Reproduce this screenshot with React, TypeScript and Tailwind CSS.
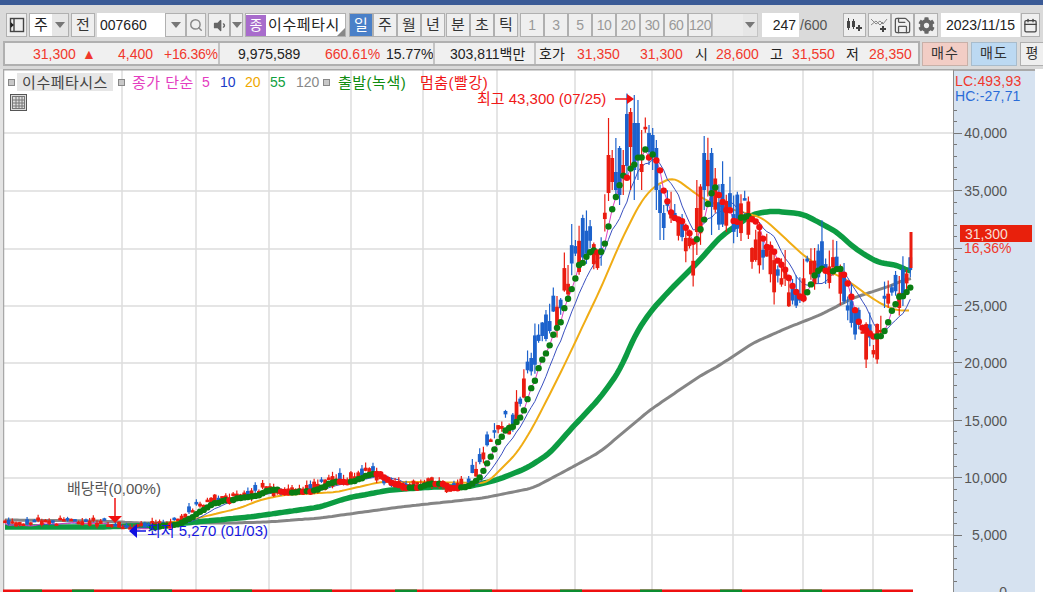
import { Calendar, Save, Search } from "lucide-react";
import { FaCog, FaVolumeDown } from "react-icons/fa";

type Pt = [number, number];
type Bar = { x: number; open: number; close: number; high: number; low: number };

const FONT = { fontFamily: '"Liberation Sans", "Noto Sans CJK KR", sans-serif' };

const GRID_X = [122, 196, 269, 351, 423, 497, 575, 652, 733, 803, 873];
const GRID_Y = [133, 191, 249, 306, 363, 421, 478, 535];
const AXIS = [
  ["40,000", 133],
  ["35,000", 191],
  ["25,000", 306],
  ["20,000", 363],
  ["15,000", 421],
  ["10,000", 478],
  ["5,000", 535],
  ["0", 592],
] as const;

const CLOSE: Pt[] = [
  [5, 523], [30, 522], [60, 521], [100, 522], [122, 526], [135, 529], [150, 525], [175, 520], [190, 510],
  [210, 500], [240, 497], [262, 489], [290, 491], [310, 490], [330, 481], [350, 475], [370, 472], [390, 482],
  [410, 488], [430, 484], [450, 487], [465, 485], [480, 460], [490, 440], [500, 425], [515, 418], [520, 395],
  [530, 365], [545, 335], [555, 310], [565, 280], [575, 250], [585, 240], [597, 262], [605, 230], [612, 165],
  [620, 180], [632, 125], [640, 145], [655, 150], [662, 210], [670, 228], [680, 240], [695, 250], [705, 165],
  [712, 195], [725, 215], [745, 215], [755, 235], [770, 262], [790, 285], [800, 292], [810, 268], [830, 268],
  [840, 280], [850, 325], [860, 332], [875, 345], [885, 310], [895, 285], [905, 292], [909, 285],
];
const MA20: Pt[] = [
  [150, 525], [190, 520], [240, 508], [260, 500], [283, 495], [337, 492], [380, 482], [417, 482], [487, 483],
  [517, 453], [533, 427], [557, 380], [573, 347], [587, 317], [600, 290], [620, 243], [630, 223], [640, 203],
  [653, 187], [673, 177], [687, 187], [700, 197], [717, 205], [763, 218], [787, 240], [803, 255], [820, 267],
  [847, 280], [870, 297], [887, 307], [900, 311], [911, 310],
];
const MA55: Pt[] = [
  [5, 527], [100, 527], [163, 525], [250, 517], [320, 507], [347, 498], [390, 490], [433, 487], [467, 487],
  [497, 480], [527, 468], [550, 453], [570, 430], [600, 398], [620, 370], [635, 335], [650, 312], [670, 290],
  [700, 260], [720, 237], [740, 223], [753, 214], [773, 211], [803, 214], [820, 223], [837, 232], [853, 247],
  [870, 258], [880, 263], [897, 265], [912, 273],
];
const MA120: Pt[] = [
  [5, 520], [100, 521], [140, 523], [233, 523], [267, 522], [320, 518], [400, 507], [483, 498], [533, 488],
  [567, 470], [600, 452], [650, 410], [700, 376], [720, 365], [753, 343], [787, 328], [820, 315], [853, 298],
  [887, 287], [912, 277],
];

// candles read off the picture around the two peaks: x, open, close, high, low
const FIXED: number[][] = [
  [609, 193, 155, 118, 201],
  [613, 182, 158, 150, 190],
  [617, 172, 190, 138, 195],
  [621, 148, 195, 146, 205],
  [625, 175, 165, 150, 195],
  [631, 147, 112, 108, 190],
  [635, 123, 170, 95, 200],
  [639, 123, 160, 100, 180],
  [643, 172, 164, 130, 190],
  [650, 133, 152, 125, 165],
  [654, 135, 155, 128, 170],
  [658, 148, 190, 140, 210],
  [661, 190, 213, 185, 240],
  [665, 213, 228, 205, 240],
  [698, 232, 208, 180, 255],
  [705, 153, 190, 136, 210],
  [712, 153, 207, 148, 235],
];

const interp = (pts: Pt[], x: number) => {
  if (x <= pts[0][0]) return pts[0][1];
  for (let i = 1; i < pts.length; i++) {
    if (x <= pts[i][0]) {
      const [x0, y0] = pts[i - 1];
      const [x1, y1] = pts[i];
      return y0 + ((y1 - y0) * (x - x0)) / (x1 - x0);
    }
  }
  return pts[pts.length - 1][1];
};

// small seeded generator so that the candles stay the same on every load
let seed = 7331;
const rnd = () => {
  seed = (seed * 16807) % 2147483647;
  return seed / 2147483647;
};

const bars: Bar[] = Array.from({ length: 247 }, (_, i) => {
  const x = 5 + i * 3.68;
  const fixed = FIXED.find((f) => Math.abs(f[0] - x) < 1.85);
  if (fixed) return { x, open: fixed[1], close: fixed[2], high: fixed[3], low: fixed[4] };
  const mid = interp(CLOSE, x);
  const amp = (592 - mid) * (x > 470 ? 0.085 : 0.06);
  let close = mid + (rnd() - 0.5) * amp * 1.3;
  let open = mid + (rnd() - 0.5) * amp * 2.2;
  // the flat part of the chart is mostly red
  if (x < 470 && close > open && rnd() < 0.6) [close, open] = [open, close];
  return {
    x,
    close,
    open,
    high: Math.min(open, close) - rnd() * amp * 0.8,
    low: Math.max(open, close) + rnd() * amp * 0.45,
  };
});

const sma = (n: number) =>
  bars.map((_, i) => {
    const part = bars.slice(Math.max(0, i - n + 1), i + 1);
    return part.reduce((s, b) => s + b.close, 0) / part.length;
  });
const ma5 = sma(5);
const ma10 = sma(10);

const toLine = (pts: Pt[]) => pts.map((p) => `${p[0].toFixed(1)},${p[1].toFixed(1)}`).join(" ");
const lineFrom = (vals: number[]) => toLine(vals.map((v, i): Pt => [bars[i].x, v + 3]));

// resample the hand-read points so that the long averages bend softly
const smooth = (pts: Pt[]) => {
  const xs: number[] = [];
  for (let x = pts[0][0]; x <= pts[pts.length - 1][0]; x += 3) xs.push(x);
  const ys = xs.map((x) => interp(pts, x));
  return toLine(
    xs.map((x, i): Pt => {
      const part = ys.slice(Math.max(0, i - 2), Math.min(ys.length, i + 3));
      return [x, part.reduce((s, y) => s + y, 0) / part.length];
    }),
  );
};

function Chart() {
  return (
    <svg width={950} height={523} viewBox="3 69 950 523" className="block shrink-0">
      {GRID_X.map((x) => (
        <line key={x} x1={x} x2={x} y1={69} y2={592} stroke="#dcdcdc" strokeWidth={1.5} />
      ))}
      {GRID_Y.map((y) => (
        <line key={y} x1={3} x2={953} y1={y} y2={y} stroke="#dcdcdc" strokeWidth={1.5} />
      ))}
      <line x1={3.5} x2={3.5} y1={69} y2={592} stroke="#a8a8a8" strokeWidth={1.5} />
      <line x1={3} x2={953} y1={69.5} y2={69.5} stroke="#a8a8a8" strokeWidth={2} />
      <polyline points={smooth(MA120)} fill="none" stroke="#858585" strokeWidth={3} />
      <polyline points={smooth(MA55)} fill="none" stroke="#0c9c42" strokeWidth={5.5} />
      <polyline points={smooth(MA20)} fill="none" stroke="#f0ac14" strokeWidth={2} />
      <polyline points={lineFrom(ma10)} fill="none" stroke="#3a50c0" strokeWidth={1} />
      <polyline points={lineFrom(ma5)} fill="none" stroke="#e040c0" strokeWidth={1} />
      {bars.map((b, i) => {
        const up = b.close < b.open;
        const color = up ? "#ea1c10" : "#1c62cc";
        return (
          <g key={i}>
            <line x1={b.x} x2={b.x} y1={b.high} y2={b.low} stroke={color} strokeWidth={1.2} />
            <rect x={b.x - 1.9} y={Math.min(b.open, b.close)} width={3.8} height={Math.max(2.5, Math.abs(b.open - b.close))} fill={color} />
          </g>
        );
      })}
      {ma5.map((v, i) => {
        const rising = i === 0 || v <= ma5[i - 1];
        if (bars[i].x < 150) return null;
        return <circle key={i} cx={bars[i].x} cy={v + 3} r={3.2} fill={rising ? "#0a7d12" : "#f01010"} />;
      })}
      {/* last candle */}
      <rect x={909.5} y={232} width={3} height={36} fill="#ea1c10" />
      {/* volume pane just shows at the bottom edge */}
      <line x1={3} x2={913} y1={591} y2={591} stroke="#ee1010" strokeWidth={3} />
      {[20, 72, 150, 230, 310, 395, 470, 560, 640, 720, 800, 860].map((x) => (
        <line key={x} x1={x} x2={x + 22} y1={591} y2={591} stroke="#0c8c30" strokeWidth={3} />
      ))}
      {/* markers */}
      <line x1={615} x2={628} y1={99} y2={99} stroke="#f01010" strokeWidth={1.5} />
      <polygon points="627,94 634,99 627,104" fill="#f01010" />
      <line x1={115} x2={115} y1={498} y2={517} stroke="#f01010" strokeWidth={1.5} />
      <polygon points="108,516 122,516 115,523" fill="#f01010" />
      <polygon points="137,524 137,538 129,531" fill="#1010e0" />
      <line x1={136} x2={146} y1={531} y2={531} stroke="#1010e0" strokeWidth={1.5} />
    </svg>
  );
}

function Arrow() {
  return <span className="h-0 w-0 border-x-[5px] border-t-[6px] border-x-transparent border-t-[#777]" />;
}

function Btn({ w, children, cls = "" }: { w: string; children?: React.ReactNode; cls?: string }) {
  return (
    <div className={`flex h-[24px] shrink-0 items-center justify-center border-[1.5px] border-[#b0b0b0] bg-[#efefef] text-[15px] text-[#333] ${w} ${cls}`}>
      {children}
    </div>
  );
}

function Toolbar() {
  return (
    <div className="flex h-[24px] items-center pl-[6px]">
      <Btn w="w-[21px]">
        <svg width={16} height={16} viewBox="0 0 16 16" fill="none">
          <rect x={1.5} y={1.5} width={13} height={13} stroke="#444" strokeWidth={1.4} />
          <line x1={5} x2={5} y1={1.5} y2={14.5} stroke="#444" strokeWidth={1.4} />
          <polygon points="1.5,5 5,8 1.5,11" fill="#222" />
        </svg>
      </Btn>
      <div className="ml-[2px] flex h-[24px] w-[40px] shrink-0 border-[1.5px] border-[#b0b0b0]">
        <span className="flex w-[22px] items-center justify-center bg-white text-[15px] text-[#222]">주</span>
        <span className="flex flex-1 items-center justify-center bg-[#e6e6e6]"><Arrow /></span>
      </div>
      <Btn w="w-[24px] ml-[2px]">전</Btn>
      <div className="ml-[2px] flex h-[24px] w-[68px] shrink-0 items-center bg-white pl-[3px] text-[14px] text-[#222]">007660</div>
      <Btn w="w-[21px]"><Arrow /></Btn>
      <Btn w="w-[20px]"><Search size={14} color="#888" strokeWidth={2.5} /></Btn>
      <Btn w="w-[22px] ml-[2px]"><FaVolumeDown size={15} color="#666" /></Btn>
      <Btn w="w-[13px]"><Arrow /></Btn>
      <div className="relative ml-[2px] flex h-[24px] w-[101px] shrink-0 items-center overflow-hidden border-[1.5px] border-[#b0b0b0] bg-white">
        <span className="flex h-[21px] w-[20px] shrink-0 items-center justify-center bg-[#a86ccc] text-[14px] text-white">종</span>
        <span className="ml-[2px] whitespace-nowrap text-[15px] tracking-[0.6px] text-[#222]">이수페타시</span>
        <span className="absolute bottom-0 right-0 h-0 w-0 border-b-[8px] border-l-[8px] border-b-[#888] border-l-transparent" />
      </div>
      <div className="ml-[3px] flex">
        <Btn w="w-[24px]" cls="!bg-[#4a80c8] !text-white">일</Btn>
        {["주", "월", "년"].map((t) => (
          <Btn key={t} w="w-[24px]">{t}</Btn>
        ))}
      </div>
      <div className="ml-[1px] flex">
        {["분", "초", "틱"].map((t) => (
          <Btn key={t} w="w-[24px]">{t}</Btn>
        ))}
      </div>
      <div className="ml-[2px] flex">
        {["1", "3", "5", "10", "20", "30", "60", "120"].map((t) => (
          <Btn key={t} w="w-[24px]" cls="!text-[14px] !text-[#999] tracking-[-0.5px] overflow-hidden">{t}</Btn>
        ))}
      </div>
      <div className="flex h-[24px] w-[46px] shrink-0 border-[1.5px] border-[#c4c4c4]">
        <span className="w-[30px] bg-[#ececec]" />
        <span className="flex flex-1 items-center justify-center bg-[#e6e6e6]"><Arrow /></span>
      </div>
      <div className="ml-[4px] flex h-[24px] w-[37px] shrink-0 items-center justify-end bg-white pr-[3px] text-[14px] text-[#222]">247</div>
      <span className="ml-[1px] w-[43px] shrink-0 text-[14px] text-[#555]">/600</span>
      <div className="flex">
        <Btn w="w-[23px]">
          <svg width={18} height={16} viewBox="0 0 18 16">
            <rect x={1} y={4} width={3} height={7} fill="#444" />
            <line x1={2.5} x2={2.5} y1={1} y2={13} stroke="#444" />
            <rect x={6} y={4} width={3} height={6} fill="#444" />
            <line x1={7.5} x2={7.5} y1={2} y2={12} stroke="#444" />
            <path d="M13 8v6M10 11h6" stroke="#444" strokeWidth={2} />
          </svg>
        </Btn>
        <Btn w="w-[23px] ml-[2px]">
          <svg width={19} height={16} viewBox="0 0 19 16" fill="none">
            <path d="M1 2l5 5 4-3 3 3 4-5M1 8l5-4 4 4 3-3" stroke="#888" />
            <path d="M13 9v6M10 12h6" stroke="#444" strokeWidth={2} />
          </svg>
        </Btn>
        <Btn w="w-[23px]"><Save size={19} color="#555" strokeWidth={1.6} /></Btn>
        <Btn w="w-[24px]"><FaCog size={17} color="#666" /></Btn>
      </div>
      <div className="ml-[3px] flex h-[24px] w-[79px] shrink-0 items-center justify-center bg-white text-[14px] text-[#222]">2023/11/15</div>
      <Btn w="w-[19px] ml-[1px]"><Calendar size={15} color="#444" /></Btn>
    </div>
  );
}

function Quote() {
  const red = "shrink-0 text-[#f0382c]";
  const dark = "shrink-0 text-[#222]";
  return (
    <div className="flex h-[25px] items-center pl-[3px]">
      <div className="flex h-[25px] w-[917px] shrink-0 items-center border-2 border-[#b0b0b0] bg-[#f0f0f0] text-[14px] leading-none whitespace-nowrap">
        <span className={`${red} ml-[28px] w-[49px]`}>31,300</span>
        <span className={`${red} w-[36px] text-[14px]`}>▲</span>
        <span className={`${red} w-[46px]`}>4,400</span>
        <span className={`${red} w-[54px] tracking-[-0.3px]`}>+16.36%</span>
        <span className="h-full w-[2px] shrink-0 bg-[#c4c4c4]" />
        <span className={`${dark} ml-[18px] w-[87px]`}>9,975,589</span>
        <span className={`${red} w-[61px]`}>660.61%</span>
        <span className={`${dark} w-[47px]`}>15.77%</span>
        <span className="h-full w-[2px] shrink-0 bg-[#c4c4c4]" />
        <span className={`${dark} ml-[15px] w-[84px]`}>303,811백만</span>
        <span className="h-full w-[2px] shrink-0 bg-[#c4c4c4]" />
        <span className={`${dark} ml-[3px] w-[38px]`}>호가</span>
        <span className={`${red} w-[63px]`}>31,350</span>
        <span className={`${red} w-[55px]`}>31,300</span>
        <span className={`${dark} w-[21px]`}>시</span>
        <span className={`${red} w-[54px]`}>28,600</span>
        <span className={`${dark} w-[22px]`}>고</span>
        <span className={`${red} w-[54px]`}>31,550</span>
        <span className={`${dark} w-[23px]`}>저</span>
        <span className={red}>28,350</span>
      </div>
      <div className="ml-[2px] flex h-[24px] w-[46px] shrink-0 items-center justify-center border-[1.5px] border-[#c8b0a8] bg-[#f2cdc5] text-[14px] tracking-[1px] text-[#333]">매수</div>
      <div className="ml-[3px] flex h-[24px] w-[46px] shrink-0 items-center justify-center border-[1.5px] border-[#a8bccc] bg-[#bcd9f2] text-[14px] tracking-[1px] text-[#333]">매도</div>
      <div className="ml-[3px] flex h-[24px] w-[24px] shrink-0 items-center justify-center border-[1.5px] border-[#b0b0b0] bg-[#efefef] text-[14px] text-[#333]">평</div>
    </div>
  );
}

function Square() {
  return <span className="h-[7px] w-[7px] shrink-0 border border-[#888] bg-[#c8c8c8]" />;
}

function Legend() {
  return (
    <div className="absolute left-[5px] top-[4px] flex flex-col items-start text-[14px] leading-none whitespace-nowrap">
      <div className="flex h-[18px] items-center">
        <Square />
        <span className="ml-[2px] flex h-[18px] w-[96px] shrink-0 items-center justify-center bg-[#e6e6e6] text-[15px] tracking-[0.5px] text-[#444]">이수페타시스</span>
        <span className="ml-[5px] flex"><Square /></span>
        <span className="ml-[7px] w-[70px] shrink-0 text-[15px] tracking-[0.5px] text-[#e43cc0]">종가 단순</span>
        <span className="w-[18px] shrink-0 text-[#e43cc0]">5</span>
        <span className="w-[25px] shrink-0 text-[#1a3cc8]">10</span>
        <span className="w-[25px] shrink-0 text-[#f0a800]">20</span>
        <span className="w-[26px] shrink-0 text-[#10a040]">55</span>
        <span className="w-[27px] shrink-0 text-[#888]">120</span>
        <Square />
        <span className="ml-[8px] w-[82px] shrink-0 text-[15px] tracking-[0.5px] text-[#108c10]">출발(녹색)</span>
        <span className="text-[15px] tracking-[0.5px] text-[#f01818]">멈춤(빨강)</span>
      </div>
      <div className="ml-[2px] mt-[3px] flex h-[17px] w-[17px] items-center justify-center border border-[#555] bg-[#ddd]">
        <svg width={13} height={13} viewBox="0 0 13 13" fill="none" stroke="#777">
          <rect x={0.5} y={0.5} width={12} height={12} />
          <path d="M0 4h13M0 7h13M0 10h13M4 0v13M7 0v13M10 0v13" />
        </svg>
      </div>
    </div>
  );
}

function Axis() {
  return (
    <div className="relative h-[523px] w-[82px] shrink-0 overflow-hidden border-l border-t-2 border-[#8a8a8a] border-t-[#a8a8a8] bg-[#d6e2f0] text-[14px] leading-none">
      <div className="pl-[1px] pt-[3px] tracking-[0.2px] text-[#f0382c]">LC:493,93</div>
      <div className="pl-[1px] pt-[1px] tracking-[0.2px] text-[#2a6cd8]">HC:-27,71</div>
      {Array.from({ length: 43 }, (_, i) => (
        <span key={i} className="absolute left-0 h-px bg-[#777]" style={{ top: 521 - i * 11.48, width: i % 5 === 0 ? 8 : 3 }} />
      ))}
      {AXIS.map(([label, y]) => (
        <span key={label} className="absolute right-[28px] text-[#555]" style={{ top: y - 71 - 7 }}>{label}</span>
      ))}
      <div className="absolute left-[6px] top-[154px] flex h-[17px] w-[72px] items-center bg-[#e8200c] pl-[5px] text-[#f6dcd4]">31,300</div>
      <div className="absolute left-[10px] top-[170px] text-[#f0382c]">16,36%</div>
    </div>
  );
}

export default function App() {
  return (
    <div className="flex h-[592px] w-[1043px] flex-col overflow-hidden bg-[#dadada]" style={FONT}>
      <div className="h-[5px] shrink-0 bg-[#3a5a96]" />
      <div className="mt-[8px]"><Toolbar /></div>
      <div className="mt-[4px]"><Quote /></div>
      <div className="mt-[3px] flex h-[523px] bg-white">
        <div className="w-[3px] shrink-0 bg-[#e4e4e4]" />
        <div className="relative w-[950px] shrink-0">
          <Chart />
          <Legend />
          <span className="absolute left-[474px] top-[22px] whitespace-nowrap text-[15px] leading-none text-[#f01818]">최고 43,300 (07/25)</span>
          <span className="absolute left-[64px] top-[412px] whitespace-nowrap text-[15px] leading-none text-[#555]">배당락(0,00%)</span>
          <span className="absolute left-[144px] top-[454px] whitespace-nowrap text-[15px] leading-none text-[#1818e0]">최저 5,270 (01/03)</span>
        </div>
        <Axis />
      </div>
    </div>
  );
}
